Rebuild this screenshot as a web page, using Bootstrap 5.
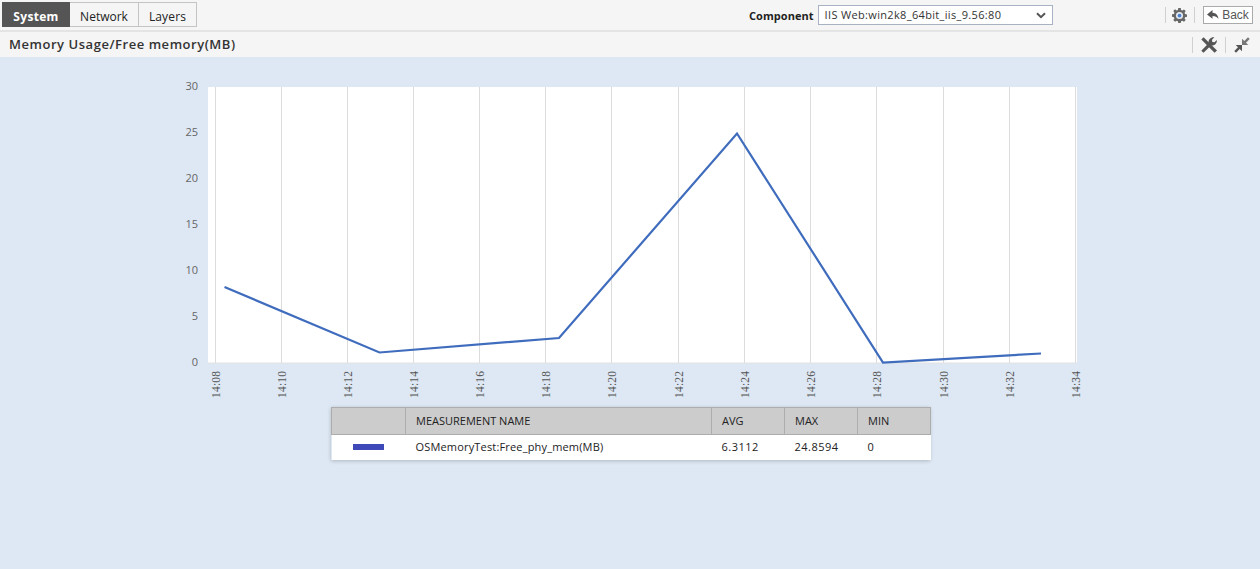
<!DOCTYPE html>
<html lang="en">
<head>
<meta charset="utf-8">
<title>Memory Usage</title>
<link rel="stylesheet" href="https://cdn.jsdelivr.net/npm/bootstrap@5.3.0/dist/css/bootstrap.min.css">
<style>
html,body{height:100%}
body{background:#dee8f4;font-family:"Open Sans","Liberation Sans",sans-serif;font-size:12px;color:#222;overflow:hidden}
.topstrip{height:32px;background:#f5f5f5;border-bottom:2px solid #e4e4e4;padding:2px 8px 0 2px}
.tabset{height:25px;border:1px solid #c4c4c4;border-left:0}
.tabitem{height:23px;line-height:27px;color:#222;font-size:12px;text-decoration:none;display:block;text-align:center}
.tabitem.first{width:68px;background:#555;color:#fff;font-weight:700;letter-spacing:.3px;margin-top:-1px;height:25px;line-height:29px}
.tabitem.second{width:68px}
.tabitem.third{width:58px;border-left:1px solid #c4c4c4;letter-spacing:.15px}
.compzone{position:absolute;left:749px;top:5px;height:20px}
.complabel{font-weight:700;font-size:11px;line-height:22px;margin-right:4px;color:#222;letter-spacing:.05px}
.compselect{width:235px;height:20px;background:#fff;border:1px solid #a9b2c2;padding:0 6px;font-size:11px;color:#333;letter-spacing:.34px;line-height:20px}
.sep{width:1px;height:16px;background:#d0d0d0;flex:none}
.backbtn{width:50px;height:18px;background:#fff;border:1px solid #aaa;font-family:"Liberation Sans",Arial,sans-serif;font-size:12px;line-height:16px;color:#555;gap:3px}
.toolzone{position:absolute;right:7px;top:6px;height:18px}
.gearmark{margin:0 7px 0 6px}
.backgap{margin-left:8px}
.titlestrip{height:25px;background:#f5f5f5;padding:0 10px 0 9px}
.titletext{font-size:13px;font-weight:600;color:#333;letter-spacing:.54px;line-height:25px;margin:0}
.wrenchmark{margin:0 8px}
.arrowmark{margin-left:8px}
.chartzone{display:block;width:1260px;height:350px}
.chartzone text{font-family:"Open Sans","Liberation Sans",sans-serif;font-size:11px;fill:#666}
.chartzone text.tk{font-family:"Liberation Serif",serif;font-size:11.5px;letter-spacing:.2px;fill:#555}
.legendbox{width:599px;margin-left:331px;box-shadow:0 1px 4px rgba(0,0,0,.22)}
.legendgrid{table-layout:fixed;width:599px;margin:0;border-collapse:collapse;font-size:11px}
.legendgrid th{background:#ccc;font-weight:400;height:27px;padding:0 10px;border:1px solid #adadad;color:#222;vertical-align:middle}
.legendgrid td{background:#fff;height:25px;padding:0 10px;border:0;color:#222;vertical-align:middle}
.legendgrid td.namecell{letter-spacing:.17px}
.legendgrid td.numcell{letter-spacing:.5px}
.swatch{width:31px;height:6px;background:#3f4ab8;margin:0 auto}
</style>
</head>
<body>
<div class="topstrip d-flex align-items-start position-relative">
  <nav class="tabset d-flex">
    <a class="tabitem first" href="#">System</a>
    <a class="tabitem second" href="#">Network</a>
    <a class="tabitem third" href="#">Layers</a>
  </nav>
  <div class="compzone d-flex">
    <span class="complabel">Component</span>
    <div class="compselect d-flex justify-content-between align-items-center">
      <span>IIS Web:win2k8_64bit_iis_9.56:80</span>
      <svg width="10" height="7" viewBox="0 0 10 7"><path d="M1 1.200 5 5.200 9 1.200" fill="none" stroke="#555" stroke-width="2"/></svg>
    </div>
  </div>
  <div class="toolzone d-flex align-items-center">
    <span class="sep"></span>
    <svg class="gearmark" width="15" height="15" viewBox="0 0 16 16"><path d="M6.700 0h2.600l.4 2.200 1.300.5L12.800 1.500l1.800 1.800-1.200 1.800.5 1.300 2.100.4v2.600l-2.100.4-.5 1.300 1.200 1.800-1.800 1.800-1.800-1.200-1.300.5-.4 2.100H6.700l-.4-2.100-1.300-.5-1.800 1.200-1.800-1.800 1.200-1.800-.5-1.300L0 9.300V6.700l2.100-.4.500-1.300-1.200-1.800 1.800-1.800L5 2.700l1.300-.5z" fill="#666"/><circle cx="8" cy="8" r="3.800" fill="#e4e8ee"/><circle cx="8" cy="8" r="2" fill="#4a7fd0"/></svg>
    <span class="sep"></span>
    <div class="backbtn backgap d-flex align-items-center justify-content-center">
      <svg width="12" height="10" viewBox="0 0 12 10"><path d="M5.500 0 0 4.400 5.500 8.800V6c2.700 0 4.800.9 6 3C11.200 5.200 9 2.800 5.500 2.700z" fill="#555"/></svg>
      <span>Back</span>
    </div>
  </div>
</div>
<div class="titlestrip d-flex justify-content-between align-items-center">
  <h1 class="titletext">Memory Usage/Free memory(MB)</h1>
  <div class="d-flex align-items-center">
    <span class="sep"></span>
    <svg class="wrenchmark" width="16" height="16" viewBox="0 0 16 16"><path d="M2.600.3 16 13.400 13.600 15.800.3 2.600z" fill="#555"/><path d="M.3 13.700 7.600 6.300C7 3 9.500-.3 13.400.3L11 2.800l.3 2.100 2.200.4L15.800 2.900C16.300 6.500 13.300 9 10 8.500L2.500 15.800z" fill="#555"/></svg>
    <span class="sep"></span>
    <svg class="arrowmark" width="16" height="16" viewBox="0 0 16 16"><path d="M14 .3 15.700 2 12 5.700l2.300 2.300H8V1.700l2.300 2.300z" fill="#777"/><path d="M2 15.700.3 14 4 10.300 1.700 8H8v6.300L5.700 12z" fill="#555"/></svg>
  </div>
</div>
<svg class="chartzone" viewBox="0 0 1260 350" role="img" aria-label="Free memory chart">
  <g transform="translate(0,-57)">
    <rect x="208" y="87" width="869" height="276" fill="#fff"/>
    <g stroke="#dcdcdc" stroke-width="1">
      <path d="M215.500 87V363M281.500 87V363M347.500 87V363M413.500 87V363M479.500 87V363M545.500 87V363M611.500 87V363M678.500 87V363M744.500 87V363M810.500 87V363M876.500 87V363M943.500 87V363M1009.500 87V363M1075.500 87V363"/>
      <path d="M208 363H1077" stroke="#e2e2e2"/>
    </g>
    <polyline points="224.500,287 379.500,352.500 559,338 737,133.500 883,362.500 1041,353.500" fill="none" stroke="#3f6cbd" stroke-width="2.200"/>
    <g text-anchor="end">
      <text x="198" y="90">30</text><text x="198" y="136">25</text><text x="198" y="182">20</text><text x="198" y="228">15</text><text x="198" y="274">10</text><text x="198" y="320">5</text><text x="198" y="366">0</text>
    </g>
    <g text-anchor="start">
      <text class="tk" transform="translate(220,398) rotate(-90)">14:08</text>
      <text class="tk" transform="translate(286,398) rotate(-90)">14:10</text>
      <text class="tk" transform="translate(352,398) rotate(-90)">14:12</text>
      <text class="tk" transform="translate(418,398) rotate(-90)">14:14</text>
      <text class="tk" transform="translate(484,398) rotate(-90)">14:16</text>
      <text class="tk" transform="translate(550,398) rotate(-90)">14:18</text>
      <text class="tk" transform="translate(616,398) rotate(-90)">14:20</text>
      <text class="tk" transform="translate(683,398) rotate(-90)">14:22</text>
      <text class="tk" transform="translate(749,398) rotate(-90)">14:24</text>
      <text class="tk" transform="translate(815,398) rotate(-90)">14:26</text>
      <text class="tk" transform="translate(881,398) rotate(-90)">14:28</text>
      <text class="tk" transform="translate(948,398) rotate(-90)">14:30</text>
      <text class="tk" transform="translate(1014,398) rotate(-90)">14:32</text>
      <text class="tk" transform="translate(1080,398) rotate(-90)">14:34</text>
    </g>
  </g>
</svg>
<div class="legendbox">
  <table class="legendgrid">
    <colgroup><col style="width:74px"><col style="width:306px"><col style="width:73px"><col style="width:73px"><col style="width:73px"></colgroup>
    <thead><tr><th></th><th>MEASUREMENT NAME</th><th>AVG</th><th>MAX</th><th>MIN</th></tr></thead>
    <tbody><tr><td><div class="swatch"></div></td><td class="namecell">OSMemoryTest:Free_phy_mem(MB)</td><td class="numcell">6.3112</td><td class="numcell">24.8594</td><td class="numcell">0</td></tr></tbody>
  </table>
</div>
<script src="https://cdn.jsdelivr.net/npm/bootstrap@5.3.0/dist/js/bootstrap.bundle.min.js"></script>
</body>
</html>
